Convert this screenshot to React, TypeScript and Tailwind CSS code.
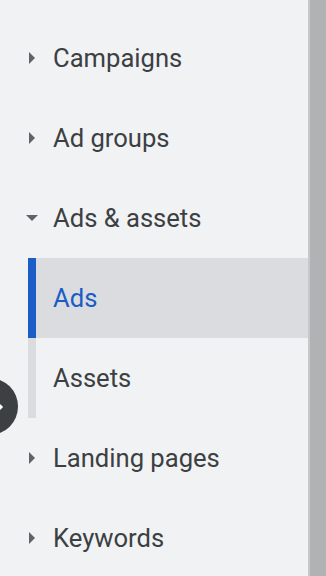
const font = { fontFamily: "Roboto, 'Noto Sans', sans-serif" };

function RightArrow() {
  return (
    <svg width="24" height="24" viewBox="0 0 24 24" className="shrink-0">
      <path d="M9 6v12l6-6z" fill="#5f6368" />
    </svg>
  );
}

function DownArrow() {
  return (
    <svg width="24" height="24" viewBox="0 0 24 24" className="shrink-0">
      <path d="M6 9h12l-6 6z" fill="#5f6368" />
    </svg>
  );
}

function ParentRow({ label, open }: { label: string; open?: boolean }) {
  return (
    <div className="flex h-[80px] items-center pl-[20px]">
      {open ? <DownArrow /> : <RightArrow />}
      <span className="ml-[9px] text-[25.6px] text-[#3c4043]">{label}</span>
    </div>
  );
}

function ChildRow({ label, active }: { label: string; active?: boolean }) {
  return (
    <div
      className={
        active
          ? "flex h-[80px] items-center border-l-8 border-[#1b5cc6] bg-[#dadce0] pl-[17px]"
          : "flex h-[80px] items-center border-l-8 border-[#dadce0] pl-[17px]"
      }
    >
      <span
        className={
          active ? "text-[25.6px] text-[#1b5cc6]" : "text-[25.6px] text-[#3c4043]"
        }
      >
        {label}
      </span>
    </div>
  );
}

export default function App() {
  return (
    <div
      className="relative flex h-[576px] w-[326px] overflow-hidden bg-[#f1f2f4]"
      style={font}
    >
      <nav className="flex-1 pt-[18px]">
        <ParentRow label="Campaigns" />
        <ParentRow label="Ad groups" />
        <ParentRow label="Ads & assets" open />
        <div className="ml-[28px]">
          <ChildRow label="Ads" active />
          <ChildRow label="Assets" />
        </div>
        <ParentRow label="Landing pages" />
        <ParentRow label="Keywords" />
      </nav>
      <div className="w-[18px] border-l-2 border-[#c7c8ca] bg-[#b1b2b4]" />

      <button className="absolute left-[-39px] top-[378px] flex h-[57px] w-[57px] items-center justify-end rounded-full bg-[#3c4043] pr-[10px]">
        <svg width="14" height="16" viewBox="0 0 14 16">
          <path
            d="M2 3l5 5-5 5"
            fill="none"
            stroke="#ffffff"
            strokeWidth="3"
            strokeLinecap="square"
          />
        </svg>
      </button>
    </div>
  );
}
